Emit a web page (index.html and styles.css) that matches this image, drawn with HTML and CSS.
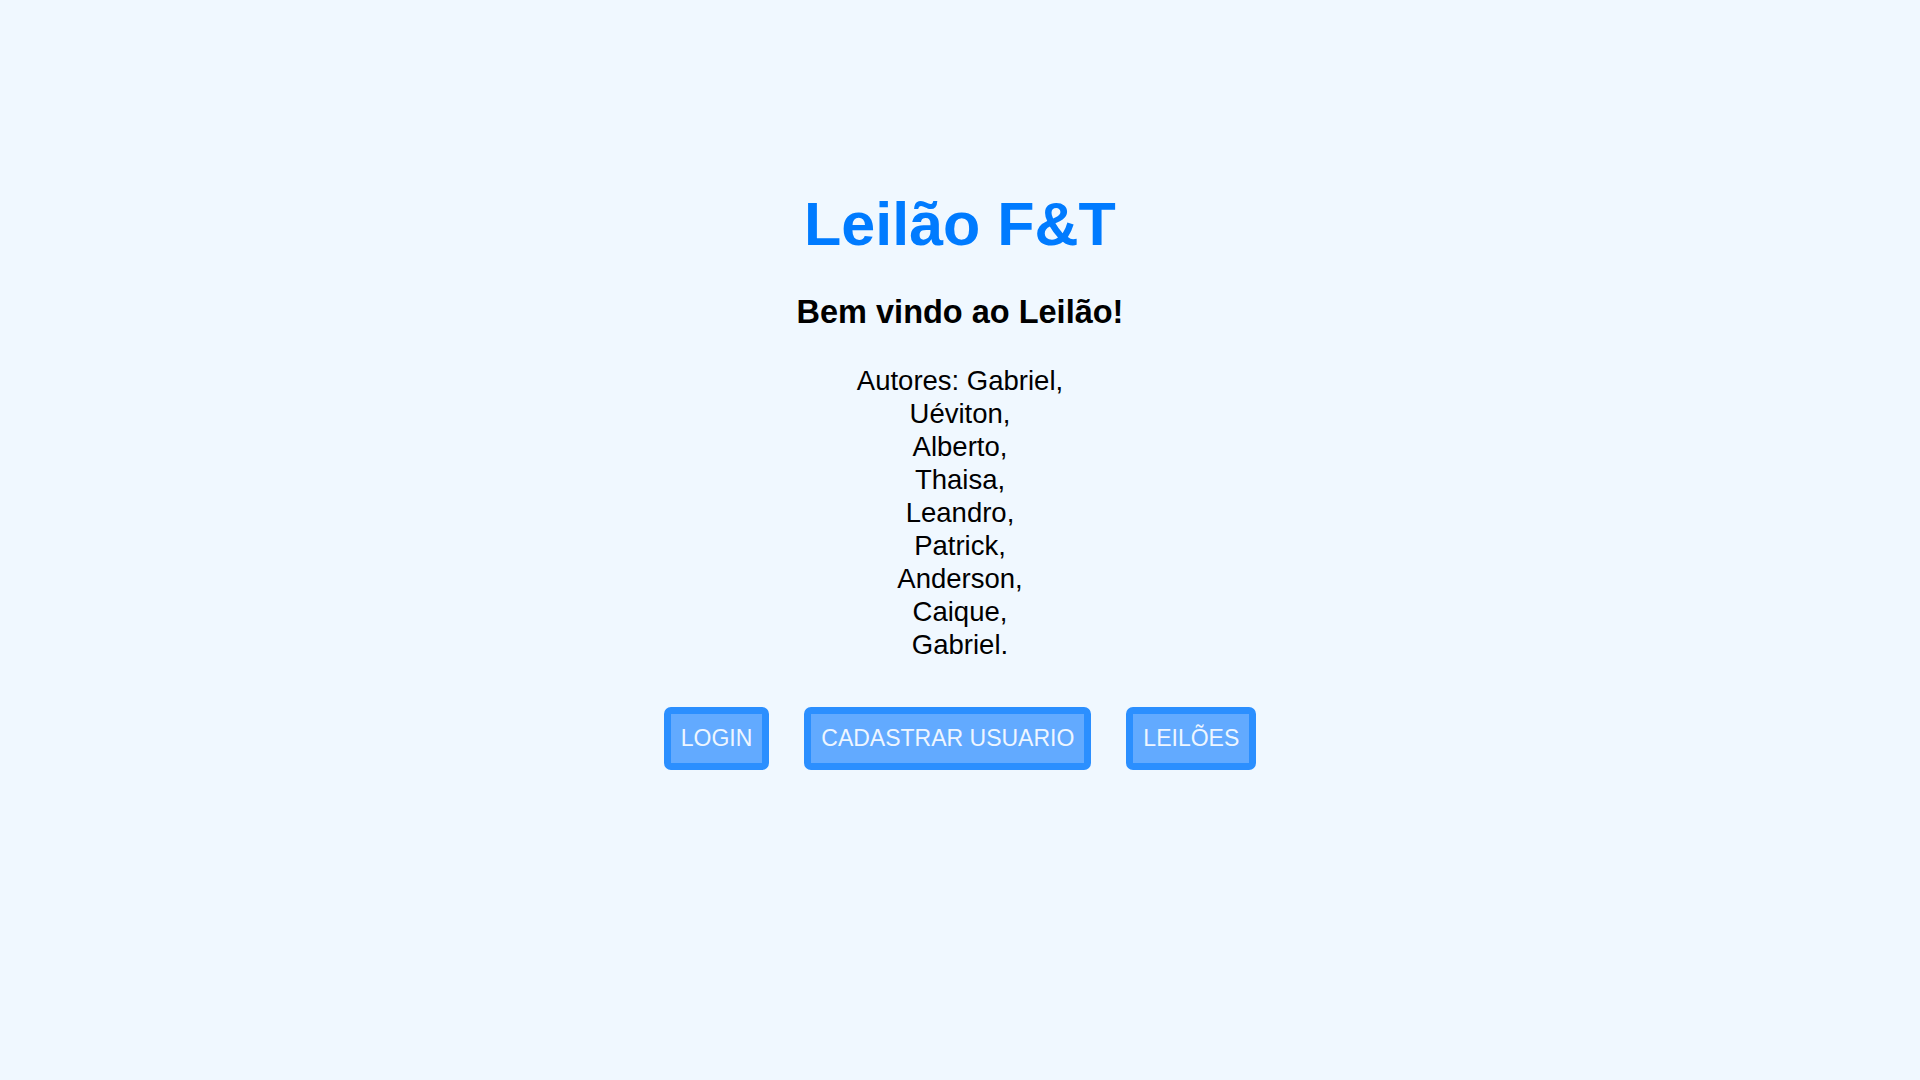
FILE: index.html
```html
<!DOCTYPE html>
<html lang="pt-BR">
<head>
<meta charset="utf-8">
<title>Leilão F&amp;T</title>
<link rel="stylesheet" href="styles.css">
</head>
<body>
<main class="home">
  <h1 class="title">Leilão F&amp;T</h1>
  <h2 class="subtitle">Bem vindo ao Leilão!</h2>
  <p class="authors">Autores: Gabriel,<br>Uéviton,<br>Alberto,<br>Thaisa,<br>Leandro,<br>Patrick,<br>Anderson,<br>Caique,<br>Gabriel.</p>
  <div class="actions">
    <button class="btn">LOGIN</button>
    <button class="btn">CADASTRAR USUARIO</button>
    <button class="btn">LEILÕES</button>
  </div>
</main>
</body>
</html>
```
FILE: styles.css
```css
html, body {
  margin: 0;
  padding: 0;
}

body {
  background: #f0f8ff;
  font-family: "Liberation Sans", Arial, sans-serif;
  color: #000;
}

.home {
  display: flex;
  flex-direction: column;
  align-items: center;
  text-align: center;
  padding-top: 189px;
}

.title {
  margin: 0;
  font-size: 61px;
  line-height: 70px;
  font-weight: bold;
  color: #007bff;
}

.subtitle {
  margin: 34px 0 0;
  font-size: 32.5px;
  line-height: 38px;
  font-weight: bold;
}

.authors {
  margin: 33px 0 0;
  font-size: 27.5px;
  line-height: 33px;
}

.actions {
  margin-top: 46px;
  display: flex;
  justify-content: center;
  gap: 35px;
}

.btn {
  margin: 0;
  border: 7px solid #2b8fff;
  border-radius: 7px;
  background: #62aaff;
  color: #eef6ff;
  font-family: "Liberation Sans", Arial, sans-serif;
  font-size: 23px;
  line-height: 27px;
  padding: 11px 10px;
  cursor: pointer;
}
```
